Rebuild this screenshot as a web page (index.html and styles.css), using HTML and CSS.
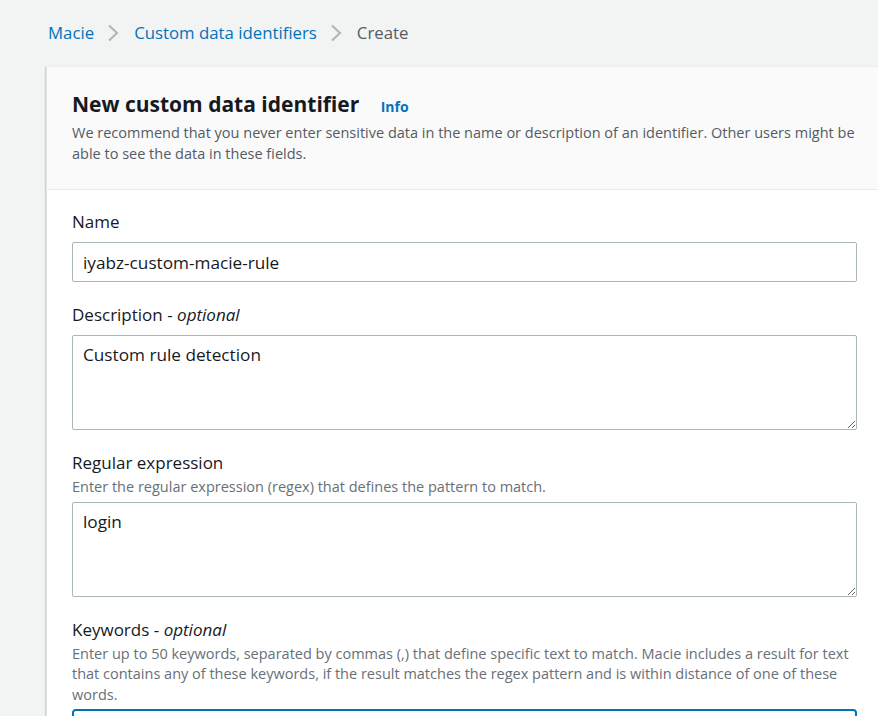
FILE: index.html
```html
<!DOCTYPE html>
<html lang="en">
<head>
<meta charset="utf-8">
<title>Create custom data identifier</title>
<link rel="stylesheet" href="styles.css">
</head>
<body>
<nav class="breadcrumbs">
  <a class="crumb" href="#">Macie</a>
  <svg class="chev" width="14" height="18" viewBox="0 0 14 18"><path d="M2 1.5 L10 9 L2 16.5" fill="none" stroke="#aab7b8" stroke-width="2"/></svg>
  <a class="crumb" href="#">Custom data identifiers</a>
  <svg class="chev" width="14" height="18" viewBox="0 0 14 18"><path d="M2 1.5 L10 9 L2 16.5" fill="none" stroke="#aab7b8" stroke-width="2"/></svg>
  <span class="crumb current">Create</span>
</nav>
<section class="panel">
  <header class="panel-header">
    <h1 class="title">New custom data identifier <a class="info" href="#">Info</a></h1>
    <p class="desc">We recommend that you never enter sensitive data in the name or description of an identifier. Other users might be able to see the data in these fields.</p>
  </header>
  <div class="panel-body">
    <div class="field">
      <label class="label">Name</label>
      <input class="control input" type="text" value="iyabz-custom-macie-rule">
    </div>
    <div class="field">
      <label class="label">Description - <i>optional</i></label>
      <textarea class="control area">Custom rule detection</textarea>
    </div>
    <div class="field">
      <label class="label">Regular expression</label>
      <div class="hint">Enter the regular expression (regex) that defines the pattern to match.</div>
      <textarea class="control area">login</textarea>
    </div>
    <div class="field">
      <label class="label">Keywords - <i>optional</i></label>
      <div class="hint">Enter up to 50 keywords, separated by commas (,) that define specific text to match. Macie includes a result for text that contains any of these keywords, if the result matches the regex pattern and is within distance of one of these words.</div>
      <input class="control input focused" type="text" value="">
    </div>
  </div>
</section>
</body>
</html>
```
FILE: styles.css
```css
html, body {
  margin: 0;
  padding: 0;
  overflow: hidden;
}
body {
  background: #f2f3f3;
  font-family: "Open Sans", "Noto Sans", Arial, sans-serif;
  color: #16191f;
  height: 716px;
}
.breadcrumbs {
  display: flex;
  align-items: center;
  gap: 13px;
  padding: 22px 0 0 48px;
  height: 22px;
  font-size: 16.8px;
  line-height: 22px;
}
.crumb {
  color: #0073bb;
  text-decoration: none;
}
.crumb.current {
  color: #545b64;
}
.chev {
  display: block;
}
.panel {
  margin: 22px -6px 0 46px;
  background: #ffffff;
  border-top: 1px solid #eaeded;
  border-left: 1px solid #e1e4e4;
  box-shadow: 0 1px 1px 0 rgba(0, 28, 36, 0.2), -1px 1px 1px 0 rgba(0, 28, 36, 0.12);
}
.panel-header {
  background: #fafafa;
  border-bottom: 1px solid #eaeded;
  padding: 23px 27px 25px 25px;
}
.title {
  margin: 0;
  font-size: 21px;
  line-height: 28px;
  font-weight: 700;
  color: #16191f;
}
.info {
  margin-left: 16px;
  font-size: 14px;
  font-weight: 700;
  color: #0073bb;
  text-decoration: none;
}
.desc {
  margin: 1px 0 0;
  font-size: 14.5px;
  line-height: 21px;
  color: #545b64;
}
.panel-body {
  padding: 21px 27px 0 25px;
  display: flex;
  flex-direction: column;
  gap: 22px;
}
.field {
  display: flex;
  flex-direction: column;
}
.label {
  font-size: 17px;
  line-height: 22px;
  color: #16191f;
}
.hint {
  margin-top: 3px;
  font-size: 14.5px;
  line-height: 20.5px;
  color: #687078;
}
.control {
  margin-top: 4px;
  box-sizing: border-box;
  width: 100%;
  font-family: inherit;
  font-size: 17.2px;
  line-height: 22px;
  color: #16191f;
  background: #ffffff;
  border: 1px solid #aab7b8;
  border-radius: 2px;
  outline: none;
}
.label + .control {
  margin-top: 9px;
}
.input {
  height: 40px;
  padding: 0 10px;
}
.area {
  height: 95px;
  padding: 8px 10px;
  resize: vertical;
  display: block;
}
.focused {
  border: 2px solid #0073bb;
  border-radius: 4px;
}
```
